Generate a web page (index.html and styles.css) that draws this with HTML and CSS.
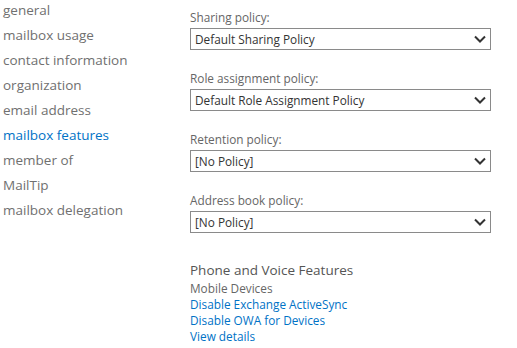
FILE: index.html
```html
<!DOCTYPE html>
<html lang="en">
<head>
  <meta charset="UTF-8">
  <title>Mailbox features</title>
  <link rel="stylesheet" href="styles.css">
</head>
<body>
  <div class="page">
    <ul class="nav">
      <li>general</li>
      <li>mailbox usage</li>
      <li>contact information</li>
      <li>organization</li>
      <li>email address</li>
      <li class="active">mailbox features</li>
      <li>member of</li>
      <li>MailTip</li>
      <li>mailbox delegation</li>
    </ul>

    <div class="content">
      <div class="field">
        <label>Sharing policy:</label>
        <div class="dropdown">
          <span>Default Sharing Policy</span>
          <svg class="chevron" width="12" height="8" viewBox="0 0 12 8"><path d="M1 1.5 L6 6.5 L11 1.5" fill="none" stroke="#333" stroke-width="2"/></svg>
        </div>
      </div>

      <div class="field">
        <label>Role assignment policy:</label>
        <div class="dropdown">
          <span>Default Role Assignment Policy</span>
          <svg class="chevron" width="12" height="8" viewBox="0 0 12 8"><path d="M1 1.5 L6 6.5 L11 1.5" fill="none" stroke="#333" stroke-width="2"/></svg>
        </div>
      </div>

      <div class="field">
        <label>Retention policy:</label>
        <div class="dropdown">
          <span>[No Policy]</span>
          <svg class="chevron" width="12" height="8" viewBox="0 0 12 8"><path d="M1 1.5 L6 6.5 L11 1.5" fill="none" stroke="#333" stroke-width="2"/></svg>
        </div>
      </div>

      <div class="field">
        <label>Address book policy:</label>
        <div class="dropdown">
          <span>[No Policy]</span>
          <svg class="chevron" width="12" height="8" viewBox="0 0 12 8"><path d="M1 1.5 L6 6.5 L11 1.5" fill="none" stroke="#333" stroke-width="2"/></svg>
        </div>
      </div>

      <h2>Phone and Voice Features</h2>
      <div class="sub">Mobile Devices</div>
      <a href="#">Disable Exchange ActiveSync</a>
      <a href="#">Disable OWA for Devices</a>
      <a href="#">View details</a>
    </div>
  </div>
</body>
</html>
```

FILE: styles.css
```css
body { margin: 0; background: #fff; font-family: "Open Sans", "Noto Sans", sans-serif; }
.page { display: flex; }

.nav { list-style: none; margin: -2px 0 0 0; padding: 0 0 0 3px; width: 187px; }
.nav li { font-size: 13.5px; line-height: 25px; color: #707070; }
.nav li.active { color: #0072c6; }

.content { display: flex; flex-direction: column; width: 301px; padding-top: 9px; }
.field { display: flex; flex-direction: column; margin-bottom: 20px; }
.field label { font-size: 11.8px; line-height: 16px; color: #666; margin-bottom: 3px; }

.dropdown { display: flex; align-items: center; justify-content: space-between; height: 20px; border: 1px solid #8a8a8a; padding: 0 4px 0 4px; }
.dropdown span { font-size: 11.8px; color: #333; }
.chevron { display: block; }

h2 { font-size: 13.5px; font-weight: normal; line-height: 20px; color: #555; margin: 7px 0 0 0; }
.sub { font-size: 11.8px; line-height: 16px; color: #666; }
.content a { font-size: 11.8px; line-height: 16px; color: #0072c6; text-decoration: none; }
```
